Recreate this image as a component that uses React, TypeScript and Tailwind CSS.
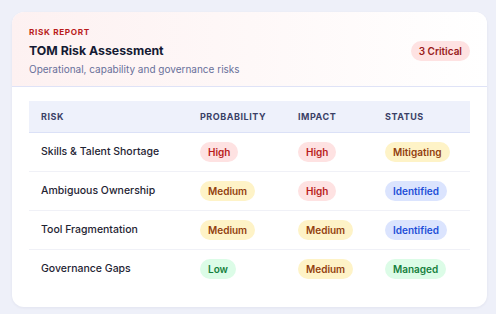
import React from "react";

type Tone = "red" | "amber" | "blue" | "green";

const toneClass: Record<Tone, string> = {
  red: "bg-[#fee2e2] text-[#b91c1c]",
  amber: "bg-[#fef3c7] text-[#92400e]",
  blue: "bg-[#dbe4fe] text-[#1d4ed8]",
  green: "bg-[#dcfce7] text-[#15803d]",
};

const levelTone: Record<string, Tone> = { High: "red", Medium: "amber", Low: "green" };
const statusTone: Record<string, Tone> = { Mitigating: "amber", Identified: "blue", Managed: "green" };

const rows = [
  { risk: "Skills & Talent Shortage", probability: "High", impact: "High", status: "Mitigating" },
  { risk: "Ambiguous Ownership", probability: "Medium", impact: "High", status: "Identified" },
  { risk: "Tool Fragmentation", probability: "Medium", impact: "Medium", status: "Identified" },
  { risk: "Governance Gaps", probability: "Low", impact: "Medium", status: "Managed" },
];

function Pill({ label, tone }: { label: string; tone: Tone }) {
  return (
    <span className={`inline-flex h-5 items-center rounded-full px-2 align-middle text-[10px] font-semibold ${toneClass[tone]}`}>
      {label}
    </span>
  );
}

export default function App() {
  return (
    <div className="min-h-[314px] w-[496px] bg-[#eef0f9] pl-3 pt-3 font-['Inter',sans-serif]">
      <div className="h-[295px] w-[475px] overflow-hidden rounded-xl bg-white shadow-[0_1px_3px_rgba(30,40,90,0.06)]">
        {/* Header */}
        <div className="flex items-start justify-between border-b border-[#dfe3f7] bg-gradient-to-r from-[#fdf1f1] to-white px-[17px] pb-[10px] pt-[15px]">
          <div>
            <p className="text-[8.2px] font-bold uppercase leading-[11px] tracking-[0.08em] text-[#b91c1c]">Risk Report</p>
            <h1 className="mt-[5px] text-[12.3px] font-bold leading-[16px] text-[#141a33]">TOM Risk Assessment</h1>
            <p className="mt-[3px] text-[10px] leading-[14px] text-[#68709a]">Operational, capability and governance risks</p>
          </div>
          <span className="mt-[14px] inline-flex h-5 items-center rounded-full bg-[#fee2e2] px-2 text-[10px] font-semibold text-[#991b1b]">
            3 Critical
          </span>
        </div>

        {/* Table */}
        <div className="px-[17px] pt-[14px]">
          <table className="w-full table-fixed border-collapse">
            <colgroup>
              <col className="w-[171px]" />
              <col className="w-[98px]" />
              <col className="w-[87px]" />
              <col />
            </colgroup>
            <thead>
              <tr className="h-[31px] border-b border-[#dbe1f7] bg-[#eef1fb] text-left text-[9px] font-bold uppercase tracking-[0.06em] text-[#3a4066]">
                <th className="pl-3 font-bold">Risk</th>
                <th className="font-bold">Probability</th>
                <th className="font-bold">Impact</th>
                <th className="font-bold">Status</th>
              </tr>
            </thead>
            <tbody>
              {rows.map((r, i) => (
                <tr key={r.risk} className={`h-[39px] ${i < rows.length - 1 ? "border-b border-[#f0f1f7]" : ""}`}>
                  <td className="pl-3 pt-px text-[10.5px] font-medium text-[#1f2433]">{r.risk}</td>
                  <td className="leading-none">
                    <Pill label={r.probability} tone={levelTone[r.probability]} />
                  </td>
                  <td className="leading-none">
                    <Pill label={r.impact} tone={levelTone[r.impact]} />
                  </td>
                  <td className="leading-none">
                    <Pill label={r.status} tone={statusTone[r.status]} />
                  </td>
                </tr>
              ))}
            </tbody>
          </table>
        </div>
      </div>
    </div>
  );
}
